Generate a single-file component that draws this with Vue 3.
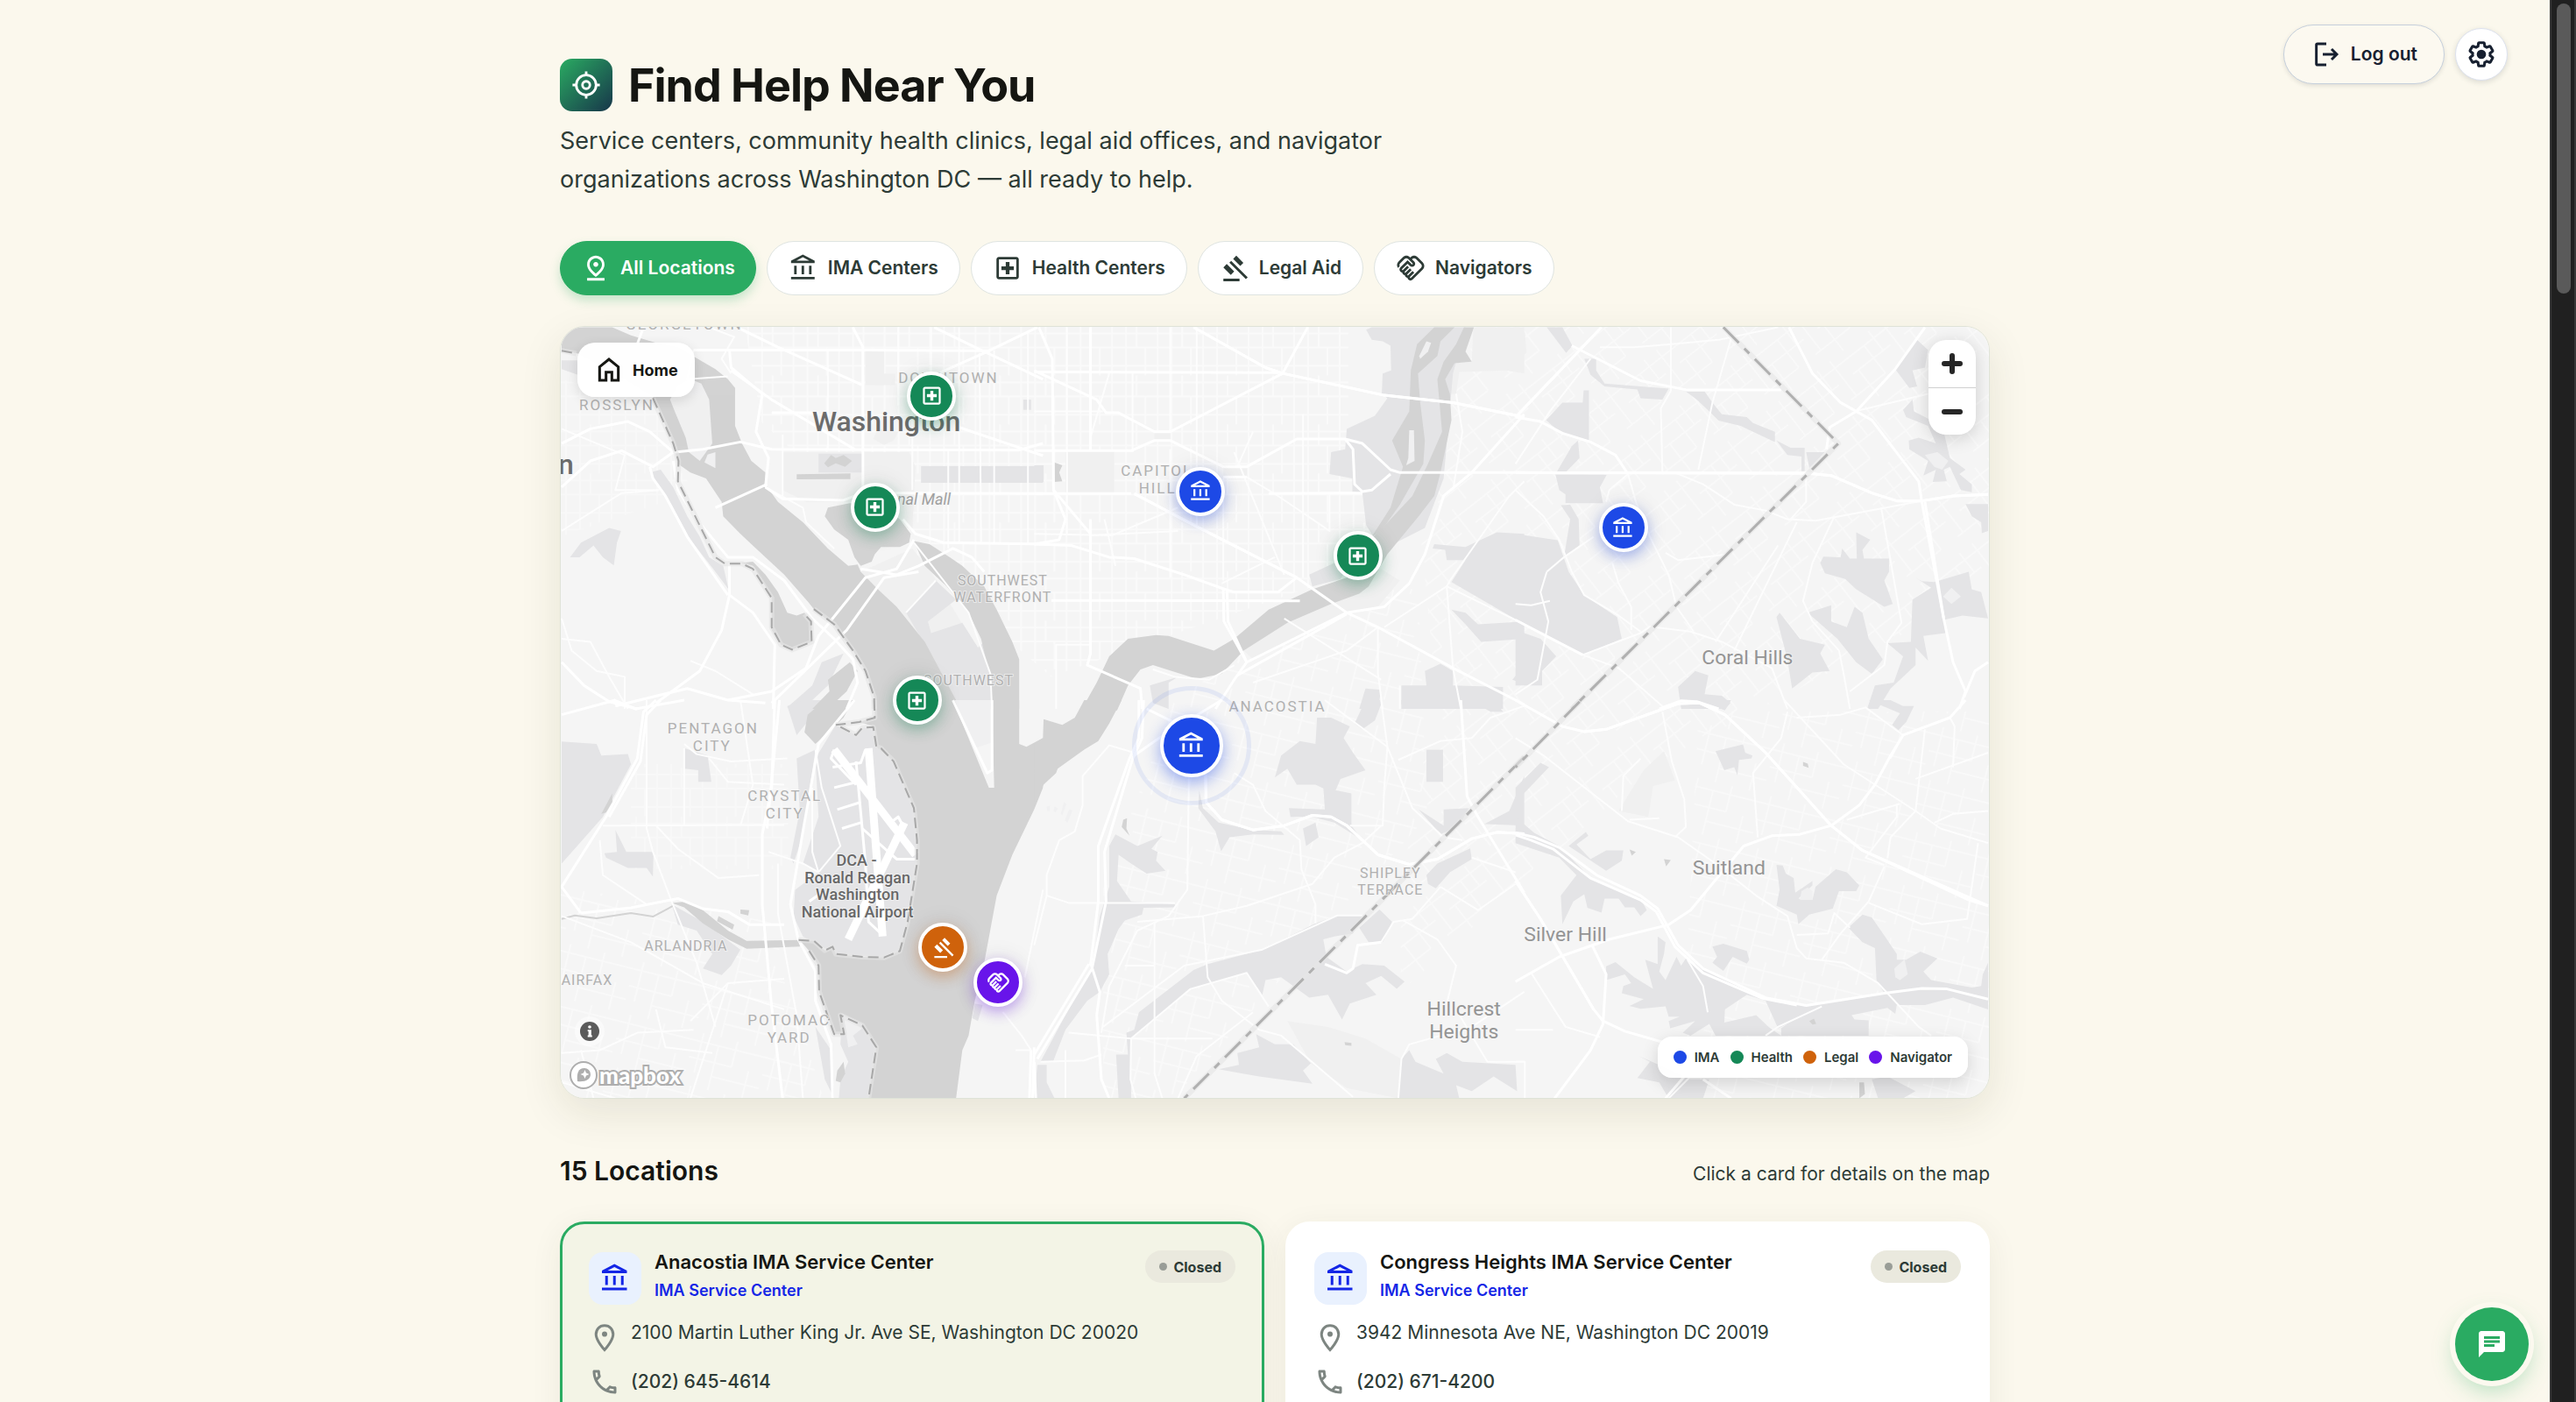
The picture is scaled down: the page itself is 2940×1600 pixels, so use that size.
<script setup>
import { ref } from 'vue'

const icons = {
  all: 'M12 4c1.93 0 5 1.4 5 5.15 0 2.16-1.72 4.67-5 7.32-3.28-2.65-5-5.17-5-7.32C7 5.4 10.07 4 12 4m0-2C8.73 2 5 4.46 5 9.15c0 3.12 2.33 6.41 7 9.85 4.67-3.44 7-6.73 7-9.85C19 4.46 15.27 2 12 2z M12 7c-1.1 0-2 .9-2 2s.9 2 2 2 2-.9 2-2-.9-2-2-2zM5 20h14v2H5z',
  ima: 'M6.5 10h-2v7h2v-7zm6 0h-2v7h2v-7zm8.5 9H2v2h19v-2zm-2.5-9h-2v7h2v-7zm-7-6.74L16.71 6H6.29l5.21-2.74m0-2.26L2 6v2h19V6l-9.5-5z',
  health: 'M19 3H5c-1.1 0-2 .9-2 2v14c0 1.1.9 2 2 2h14c1.1 0 2-.9 2-2V5c0-1.1-.9-2-2-2zm0 16H5V5h14v14zm-8.5-2h3v-3.5H17v-3h-3.5V7h-3v3.5H7v3h3.5z',
  legal: 'M3 20.5h13v2H3zM13.4 2l5.7 5.700-2.500 2.500L10.900 4.500zM5.700 8.700l6 6-2.700 2.700-6-6zM9.300 6.100L22.600 19.400l-1.500 1.500L7.800 7.600z',
  navigator: 'M12.22 19.85c-.18.18-.5.21-.71 0-.18-.18-.21-.5 0-.71l3.39-3.39-1.41-1.41-3.39 3.39c-.19.2-.51.19-.71 0-.21-.21-.18-.53 0-.71l3.39-3.39-1.41-1.41-3.39 3.39c-.18.18-.5.21-.71 0-.19-.19-.19-.51 0-.71l3.39-3.39-1.42-1.41-3.39 3.39c-.18.18-.5.21-.71 0-.19-.2-.19-.51 0-.71L9.52 8.4l1.87 1.86c.95.95 2.59.94 3.54 0 .98-.98.98-2.56 0-3.54l-1.86-1.86.28-.28c.78-.78 2.05-.78 2.83 0l4.24 4.24c.78.78.78 2.05 0 2.83l-8.2 8.2zm9.61-6.78c1.56-1.56 1.56-4.09 0-5.66l-4.24-4.24c-1.56-1.56-4.09-1.56-5.66 0l-.28.28-.28-.28c-1.56-1.56-4.09-1.56-5.66 0L2.17 6.71C.75 8.13.62 10.34 1.77 11.9l1.45-1.45c-.39-.75-.26-1.7.37-2.33l3.54-3.54c.78-.78 2.05-.78 2.83 0l3.56 3.56c.18.18.21.5 0 .71-.21.21-.53.18-.71 0L9.52 5.57l-5.8 5.79c-.98.97-.98 2.56 0 3.54.39.39.89.63 1.42.7.07.52.3 1.02.7 1.42.4.4.9.63 1.42.7.07.52.3 1.02.7 1.42.4.4.9.63 1.42.7.07.54.31 1.03.7 1.42.47.47 1.1.73 1.77.73.67 0 1.3-.26 1.77-.73l8.21-8.19z',
  phone: 'M6.54 5c.06.89.21 1.76.45 2.59l-1.2 1.2c-.41-1.2-.67-2.47-.76-3.79h1.51m9.86 12.02c.85.24 1.72.39 2.6.45v1.49c-1.32-.09-2.59-.35-3.8-.75l1.2-1.19M7.5 3H4c-.55 0-1 .45-1 1 0 9.39 7.61 17 17 17 .55 0 1-.45 1-1v-3.49c0-.55-.45-1-1-1-1.24 0-2.45-.2-3.57-.57-.1-.04-.21-.05-.31-.05-.26 0-.51.1-.71.29l-2.2 2.2c-2.83-1.45-5.15-3.76-6.59-6.59l2.2-2.2c.28-.28.36-.67.25-1.02C8.7 6.45 8.5 5.25 8.5 4c0-.55-.45-1-1-1z',
  chat: 'M20 2H4c-1.1 0-2 .9-2 2v18l4-4h14c1.1 0 2-.9 2-2V4c0-1.1-.9-2-2-2zM6 9h12v2H6V9zm8 5H6v-2h8v2zm4-6H6V6h12v2z',
  gear: 'M19.43 12.98c.04-.32.07-.64.07-.98 0-.34-.03-.66-.07-.98l2.11-1.65c.19-.15.24-.42.12-.64l-2-3.46c-.09-.16-.26-.25-.44-.25-.06 0-.12.01-.17.03l-2.49 1c-.52-.4-1.08-.73-1.69-.98l-.38-2.65C14.46 2.18 14.25 2 14 2h-4c-.25 0-.46.18-.49.42l-.38 2.65c-.61.25-1.17.59-1.69.98l-2.49-1c-.06-.02-.12-.03-.18-.03-.17 0-.34.09-.43.25l-2 3.46c-.13.22-.07.49.12.64l2.11 1.65c-.04.32-.07.65-.07.98 0 .33.03.66.07.98l-2.11 1.65c-.19.15-.24.42-.12.64l2 3.46c.09.16.26.25.44.25.06 0 .12-.01.17-.03l2.49-1c.52.4 1.08.73 1.69.98l.38 2.65c.03.24.24.42.49.42h4c.25 0 .46-.18.49-.42l.38-2.65c.61-.25 1.17-.59 1.69-.98l2.49 1c.06.02.12.03.18.03.17 0 .34-.09.43-.25l2-3.46c.12-.22.07-.49-.12-.64l-2.11-1.65z'
}

const filters = [
  { id: 'all', label: 'All Locations' },
  { id: 'ima', label: 'IMA Centers' },
  { id: 'health', label: 'Health Centers' },
  { id: 'legal', label: 'Legal Aid' },
  { id: 'navigator', label: 'Navigators' }
]
const active = ref('all')

// Marker places are in map units; the map is 1632 x 882 units
const markers = [
  { kind: 'health', x: 424, y: 79 },
  { kind: 'health', x: 359, y: 206 },
  { kind: 'health', x: 407, y: 427 },
  { kind: 'health', x: 911, y: 262 },
  { kind: 'ima', x: 731, y: 188 },
  { kind: 'ima', x: 1214, y: 230 },
  { kind: 'legal', x: 437, y: 710 },
  { kind: 'navigator', x: 500, y: 750 },
  { kind: 'ima', x: 721, y: 479, selected: true }
]
const place = (m) => ({ left: (m.x / 1632) * 100 + '%', top: (m.y / 882) * 100 + '%' })

const legend = [
  { kind: 'ima', label: 'IMA' },
  { kind: 'health', label: 'Health' },
  { kind: 'legal', label: 'Legal' },
  { kind: 'navigator', label: 'Navigator' }
]

const cards = [
  { name: 'Anacostia IMA Service Center', address: '2100 Martin Luther King Jr. Ave SE, Washington DC 20020', phone: '(202) 645-4614', selected: true },
  { name: 'Congress Heights IMA Service Center', address: '3942 Minnesota Ave NE, Washington DC 20019', phone: '(202) 671-4200' }
]

const list = (s) => s.trim().split('|').filter(Boolean)

// Basemap tiles; shapes are point lists in each tile's own grid
const tiles = [
  {
    x: -9, y: -13,
    pale: list('735,470 1140,470 1160,520 1150,740 1040,640 810,640 735,600|1030,200 1095,200 1095,240 1030,240|1000,120 1060,120 1060,240 1000,240|1040,390 1105,400 1090,430 1060,445 1025,425|1150,800 1210,880 1400,1220 1400,1350 1300,1350 1190,1120 985,880'),
    park: list('310,540 345,530 385,590 430,690 470,760 500,830 545,860 562,940 520,880 440,770 380,650|55,830 90,780 180,730 218,740 205,780 195,858 160,830 130,790 85,830|750,1345 830,1270 860,1190 930,1160 880,1270 800,1350|1130,1020 1225,910 1290,975 1200,1050 1210,1090 1310,1055 1360,1140 1380,1120 1405,1230 1405,1350 1300,1350 1240,1220|1178,518 1568,518 1568,575 1178,575|28,155 80,155 80,205 28,185|1505,290 1530,290 1530,325 1505,325|850,475 990,475 990,540 850,540'),
    water: list('28,42 190,42 250,70 330,95 400,110 455,145 520,185 560,220 583,250 583,380 605,440 635,500 680,540 680,580 720,640 800,710 880,800 945,860 975,855 985,880 1040,940 1100,1000 1190,1120 1240,1220 1305,1350 1028,1350 1028,1310 1000,1220 960,1150 900,1065 860,1030 835,1008 818,985 740,890 650,800 600,750 545,690 540,640 490,560 440,540 400,510 385,440 345,340 320,280 200,200 80,132 28,120|600,850 640,860 700,965 700,1080 730,1130 765,1147 828,1120 828,1055 805,1020 780,1030 750,1020 720,950 680,890 640,845|870,690 880,660 950,645 1040,650 1110,700 1145,750 1140,780 1110,795 1050,795 1030,820 1020,845 985,860 965,830 945,770 900,735|1155,775 1205,785 1270,830 1310,860 1380,930 1420,1010 1470,1120 1492,1180 1492,1350 1405,1350 1395,1220 1370,1110 1330,1020 1260,930 1190,860|950,1190 975,1220 940,1290 880,1350 830,1350 885,1290 880,1250|780,546 952,543 952,562 780,563|868,508 890,480 905,490 930,480 957,500 935,520 905,508 880,522'),
    isle: list('440,220 475,235 500,290 510,440 470,500 435,470 425,420 390,330 375,290 400,240|520,470 520,525 485,505 495,478'),
    major: list('450,120 740,120 1000,120 1360,122 1400,122|390,470 480,460 600,435 700,460 1490,463 1568,440|520,660 685,580|680,590 735,630 930,635 990,610 1568,612|570,190 700,290 965,460|590,42 720,110 990,240|960,42 992,110 992,610|1300,385 1568,482|1220,42 1350,110 1568,220|1550,42 1380,130 1170,230|28,590 120,500 220,465 320,520 385,470|28,440 120,390 240,365 310,400 390,475|310,520 320,560 360,620 430,760 560,960|1155,770 1100,870 1000,900 850,1100 810,1210 700,1290 560,1320 430,1280 200,1340|1170,880 1060,900 940,1080 700,1330|385,500 400,600 460,700 560,830 640,830 740,910 830,1040 900,1110 960,1180 975,1260 940,1350|565,850 565,960 640,1020 710,1130 705,1350|565,960 540,1080 470,1220 330,1330|28,1190 100,1270 180,1325 270,1350|1120,700 1160,750 1250,780 1568,785|985,870 1100,890 1170,860 1280,800 1340,830 1380,880|565,120 570,180 670,270 650,400 690,490 680,590|700,335 850,335|270,100 290,42'),
    minor: list('735,410 735,620|880,120 880,460|1105,42 1105,310|1150,230 1150,600|1210,42 1210,230|1265,460 1265,800|1300,42 1300,780|1365,130 1370,780|1412,120 1412,780|1520,60 1520,780|450,120 430,220 560,210|28,390 230,480 200,600 340,600|28,740 220,610 340,600|680,590 800,660 810,710 900,800|1130,1020 1225,910|1155,780 1330,1020 1400,1230 1405,1350|28,1110 120,1120 180,1240 240,1350|440,1185 520,1220 640,1300|28,1040 60,1150 140,1220 230,1240 230,1350|500,42 580,75 540,150 570,200'),
    edge: list('28,122 75,132|320,285 385,440 402,500 400,570 520,830 550,852 605,852 640,870 700,970 700,1070 730,1130 765,1147 828,1120 826,1050 805,1025|835,1008 900,1060 960,1150 1000,1220 1028,1310 1028,1350')
  },
  {
    x: 541, y: -13,
    pale: list('100,468 256,468 256,612 100,612|1405,42 1568,42 1568,200 1510,190 1360,195 1350,270 1320,270 1315,220 1345,165 1400,160|605,520 680,520 680,555 605,555|385,400 435,400 435,430 385,430|890,940 1110,870 1170,910 1100,1000 1000,1020 700,1180 670,1150'),
    park: list('1062,50 1080,42 1380,42 1340,200 1310,560 1250,730 1120,800 1085,760 1062,720 1050,610 1018,605 1018,560 945,545 950,470 995,460 1000,390 1090,345 1130,285 1112,270 1115,200 1142,190 1140,105 1115,90 1080,85|1480,745 1568,750 1568,1060 1335,915 1380,840 1320,840 1315,805 1275,800 1280,785 1380,795|1335,1010 1380,1020 1420,1060 1568,1050 1568,1110 1430,1120 1380,1060|1250,1220 1300,1195 1340,1220 1340,1270 1500,1275 1500,1350 1175,1350 1175,1270 1255,1270|370,1270 460,1240 430,1260 430,1350 380,1330|1060,1280 1110,1285 1100,1350 1040,1350|880,890 960,850 1010,850 980,905 890,930|1530,1250 1568,1200 1568,1265|0,515 30,515 30,572 0,572'),
    water: list('1280,42 1345,42 1300,90 1290,140 1228,200 1235,300 1250,430 1245,510 1170,650 1110,740 1080,760 1140,660 1180,520 1145,430 1200,330 1205,190 1225,100|1375,42 1407,42 1380,125 1400,160 1345,165 1315,220 1330,270 1335,360 1300,540 1280,620 1230,690 1130,820 1070,930 1040,955 950,990 810,1055 670,1150 600,1230 520,1247 380,1200 340,1215 300,1270 265,1355 150,1355 200,1260 240,1170 300,1110 390,1097 430,1100 575,1150 640,1110 750,1010 890,940 1000,900 1060,800 1090,755 1130,712 1210,620 1260,510 1305,400 1290,220 1310,160 1350,100|65,505 90,515 80,540 90,570 65,572'),
    isle: list('1255,90 1270,95 1260,125 1235,150 1232,140|1200,395 1215,395 1217,500 1190,515 1197,490'),
    major: list('0,195 790,197|510,42 740,180 795,200 1120,275 1340,300 1568,350|510,42 740,180 795,200 1120,275 1340,300 1568,350|795,200 875,42|795,200 435,400 385,400 270,335 230,335 200,290 0,190|0,465 310,465 385,430 435,430 605,520 680,520 840,425 995,425 1050,440 1140,530 1170,540 1568,540|605,555 680,555|995,425 1020,460 1025,580 1050,605 1080,600 1140,545|0,612 310,612|320,612 520,725 840,900 1000,1020 1100,1070 1340,1210 1568,1335|320,612 520,725 840,900|750,612 1050,610|15,42 58,150 62,600 180,750|62,600 100,700 80,770 0,785|0,785 120,790 240,830 320,835 480,890 610,940 640,950 780,950 840,900|55,978 850,980|180,42 180,465|180,700 180,1160 170,1200 340,1280 345,1350|605,940 607,1050 680,1190|617,940 620,1050 680,1190 640,1250 580,1350|680,1190 1000,1020 1120,1000 1200,920 1250,820 1310,620 1400,540 1568,340|650,1235 1000,1025'),
    minor: list('105,42 105,750|435,42 435,400|315,200 315,470|435,460 435,900|520,42 520,720|605,560 605,910|640,470 800,890|650,520 700,400|680,555 780,620 945,740 945,612|860,340 860,900|0,330 220,330|240,200 180,420|0,750 250,755 460,660|180,755 460,740|1568,570 1520,620 1330,910 1320,930 1340,1210 1365,1350|1320,930 1568,1060|1320,930 1120,1070|1100,1070 1100,1230 1115,1350|800,1040 1110,1250|380,1215 450,1240 560,1250 640,1200|700,1260 1000,1150 1100,1070|70,1350 70,1130 180,1130|600,920 770,830|1350,270 1370,400 1340,600|225,700 260,860|1170,1270 1170,1350'),
    edge: []
  },
  {
    x: 1091, y: -13,
    pale: list('0,42 30,60 35,130 0,160'),
    park: list('100,42 150,42 182,105 162,130|150,300 215,300 218,258 235,258 235,430 140,400 98,360|220,150 258,150 258,190 285,235 490,252 470,290 400,285 390,255 285,245 240,205|545,262 605,262 630,300 660,340 740,350 760,370 830,400 830,435 720,380 650,362 620,330 580,290|835,430 880,455 925,455 925,535 915,535 915,485 870,480|930,470 990,470 940,525|128,547 292,547 270,590 280,645 160,645 160,615 140,600|145,652 175,650 202,700 205,790 155,830 175,700|180,450 200,430 205,490 155,545 128,545|0,750 135,772 170,880 220,960 325,1035 340,1110 215,1165 0,1045|0,1080 80,1110 130,1170 85,1220 85,1270 0,1270|520,1275 575,1220 617,1235 605,1300 660,1305 688,1330 670,1350 530,1350|975,850 985,828 1040,830 1045,800 1070,835 1092,835 1090,745 1135,770 1110,805 1115,835 1195,835 1195,880 1180,910 1207,990 1180,1000 1090,940 1055,905 990,885|835,1035 845,1020 910,1110 990,1130 975,1160 1005,1220 950,1225 885,1280 870,1180|935,1020 1010,995 1010,1050 1060,1070 1085,1000 1110,1020 1130,1110 1175,1180 1140,1230 1090,1190 1030,1110|1280,900 1300,912 1340,915 1450,880 1460,940 1490,950 1512,1040 1430,1030 1370,1045 1375,1090 1305,1100 1320,1185 1280,1140 1280,1200 1200,1280 1160,1350 1125,1350 1150,1270 1210,1260 1240,1170 1190,1125 1265,1120 1270,975 1330,935|1285,85 1320,120 1310,180 1270,190 1285,245 1260,250 1215,185|1240,325 1270,290 1275,330 1320,355 1370,400 1390,490 1440,530 1420,545 1460,580 1460,607 1425,600 1390,520 1370,530 1380,570 1335,572 1345,530 1305,550 1320,500 1260,460 1258,430 1290,420 1345,440 1320,380 1250,350|1440,648 1512,648 1512,740 1492,748 1490,710 1460,690'),
    water: [],
    isle: list('1310,480 1350,470 1385,500 1365,530 1340,520|1368,965 1395,935 1425,965 1395,990'),
    major: list('275,42 0,350|275,42 0,350|1310,42 1215,185 1090,330 1005,385 995,460|0,350 80,365 150,405 240,435 320,480 360,545|0,540 930,542 1010,550 1140,610 1220,637 1300,637 1400,620 1512,615|0,540 930,542 1010,550 1140,610 1220,637 1300,637 1400,620 1512,615|180,105 400,225 550,257 850,257|875,42 950,200 1040,300 1140,360 1290,570 1300,640 1370,1040 1400,1190 1440,1290 1420,1350|1310,640 1370,1040|0,1045 215,1165|460,1350 530,1322 580,1325 650,1350|1435,1310 1470,1220 1512,1190'),
    minor: list('360,545 385,640 430,760 490,890 515,1000 570,1085|270,110 380,110 500,100 650,85 840,42|497,42 497,260 465,320 470,540|690,80 630,300 585,530|510,540 600,580 700,650 800,670 870,700 960,705 1160,665 1300,637|0,600 90,690 140,770 180,880 220,960 330,1030 400,1085|215,1165 330,1210 480,1350|215,1165 400,1090 430,1068 560,1085 660,1120 820,1210 870,1350|1020,690 950,850 920,980 950,1050 1035,1150 1050,1230 1070,1350|1170,660 1235,1055 1190,1120 1180,1200 1070,1290|1085,330 1320,270|290,640 300,600 360,545|155,830 250,760|480,815 520,840 680,820|310,850 330,920 370,1000 370,1080|840,790 640,1120|900,710 700,1150|0,990 50,995 110,980|100,880 80,950 105,1050 70,1250 0,1300|930,540 930,640 880,700|240,150 110,330 0,510|155,830 100,880'),
    edge: list('665,42 1033,440 180,1350')
  },
  {
    x: -9, y: 427,
    pale: [],
    park: list('28,142 140,150 155,190 240,185 250,220 160,400 28,560|422,165 495,190 507,280 465,280 465,240 422,235|200,445 235,520 322,520 320,605 300,575 240,575 170,540 165,525 205,520|905,85 970,120 990,95 1028,95 1035,160 1090,210 1155,370 1165,500 1192,540 1165,560 1135,760 1110,860 1060,882 905,870 870,850 800,810 770,740 775,650 850,590 800,560 850,400 840,200|780,200 840,170 800,460 770,560 760,540 790,380|380,700 480,760 600,855 570,910 540,942 480,920 510,870 460,790 400,770|750,20 800,0 870,0 780,120|840,1120 890,1200 900,1365 870,1300|925,1075 990,1110 1035,1190 1010,1365 915,1365 920,1300 945,1240 920,1180|1350,1040 1375,1045 1360,1100 1342,1090'),
    water: list('1030,0 1030,60 980,75 1028,90 1035,160 1090,210 1155,370 1165,480 1165,560 1135,760 1110,860 1060,882 990,880 905,870 895,845 870,858 835,825 790,822 820,860 850,910 852,1000 900,1145 932,1145 925,1075 990,1110 1035,1190 1010,1365 1290,1365 1310,1200 1330,1150 1350,1030 1380,900 1420,670 1470,530 1540,375 1568,300 1568,130 1515,160 1492,150 1492,0 1405,0 1412,300 1395,300 1280,0|380,695 430,690 480,720 560,790 620,825 790,822 790,845 620,852 560,820 480,765 420,710|815,50 870,0 960,0 930,60 840,150 805,110|530,740 580,770 575,787 525,758|600,718 628,720 625,738 600,732|910,1270 930,1240 935,1280 920,1310 905,1305|155,390 190,320 190,350 170,385'),
    isle: list('930,1080 990,1125 960,1150 975,1180 945,1190|1285,0 1400,0 1405,145 1350,165'),
    major: list('330,0 290,40 270,200 170,400 28,640 90,730|345,0 300,50 280,210 180,400|90,730 250,712 400,680 480,715 560,725 630,770 740,770|710,0 700,300 670,460 670,700 700,1050 735,1365|725,0 685,440|965,0 850,150 800,450 760,700 785,820 840,930 840,1030 890,1180 895,1365|28,50 200,0|195,0 265,30 420,0|560,0 680,10|1405,0 1405,240 1390,250 1280,0|1525,1365 1530,1200|1535,1365 1540,1190'),
    minor: list('160,430 740,428|420,165 420,430|300,0 300,440 320,520 380,690 460,900 520,1120|690,520 800,560 850,590|420,150 460,185 570,210 750,200|500,200 560,280 740,290|28,740 250,830 480,970 740,1060|560,970 440,1365|720,560 720,730 780,1080 800,1365|330,430 400,510 530,610 660,600|28,1210 150,1200 270,1140 450,1130|1568,650 1510,950|1440,1070 1500,1150 1530,1200 1480,1200|440,1100 560,970 740,955|330,1060 360,1190 510,1210|150,480 160,600 300,700|840,170 860,300 920,500 850,590 830,520 830,300|600,0 640,290 600,430|90,1200 130,1365|28,1310 200,1365'),
    runway: list('900,170 1160,530|1010,165 1055,810|1125,420 945,820'),
    taxi: list('970,210 1000,560 1010,760 1050,800|900,170 890,200 970,290|900,300 975,280|910,375 985,350|925,440 985,420|895,230 985,215 1000,170|820,690 860,660|990,440 1100,545 1160,545|1080,420 1105,400 1120,430 1080,540'),
    stream: '28,750 70,738 140,748 250,730 320,742 385,705',
    edge: list('1028,0 1030,60 980,75 905,85|920,92 970,120 990,95 1025,92 1035,160 1050,165 1090,210 1155,370 1165,480 1165,560 1135,760 1110,860 1060,882 990,880 905,870 895,845 870,858 835,825 785,822|820,860 850,910 852,1000 900,1145 932,1145 920,1080 990,1115 1035,1190 1010,1365')
  },
  {
    x: 541, y: 427,
    pale: list('810,1100 940,1120 1060,1160 1175,1230 1165,1365 1000,1330 885,1245'),
    park: list('905,60 950,60 1010,90 990,130 1020,180 1060,240 980,270 960,320 900,290 840,290 810,235 770,265 790,190 850,140 900,150|1175,0 1470,0 1500,40 1460,40 1420,15 1175,15|1025,80 1060,0 1115,0 1090,70 1050,100|1255,170 1308,170 1308,280 1255,280|528,310 540,370 590,420 700,445 790,450 800,462 700,460 625,470 598,518 580,450 525,370|815,370 930,375 925,300 1015,320 1015,430 1050,480 960,420 890,400 820,400|860,440 900,420 910,470 870,500|260,460 330,500 410,465 375,510 395,520 390,550 420,585 360,595 310,560 270,530 265,620 310,690 450,700 450,710 350,712 345,735 290,755 270,785 235,870 240,940 210,1000 170,1030 100,1130 60,1240 20,1240 100,1080 190,900 210,740 240,640 240,500|10,1250 40,1250 40,1310 65,1365 0,1365|555,905 730,855 900,765 970,738 1050,738 1020,800 960,810 925,820 935,880 1000,930 1050,905 1120,910 1185,965 1160,990 1110,945 1060,970 1095,1010 1010,1040 985,1095 940,1010 880,1020 790,950 740,960 730,1010 680,935 500,990 310,1160 310,1365 270,1365 262,1215 300,1215 295,1140 320,1130 335,1070 510,925|1040,780 1105,718 1145,760 1115,830 1070,830|1255,600 1290,560 1395,508 1400,545 1330,590 1285,645 1260,630|1310,375 1390,370 1360,430 1300,460 1230,375 1310,430|1440,425 1520,380 1568,260 1568,430 1450,425|710,1145 770,1180 830,1180 885,1245 860,1270 890,1315 720,1290 640,1275 590,1265 655,1250 650,1210 720,1190|1175,1230 1200,1200 1220,1240 1310,1280 1285,1230 1320,1210 1370,1240 1540,1250 1545,1340 1470,1290 1400,1340 1350,1320 1360,1365 1165,1365'),
    water: list('0,365 30,290 70,250 75,235 160,170 205,140 240,80 280,0 160,0 130,60 90,85 30,65 28,130 0,148|285,410 297,405 295,440 305,465 280,435|993,1172 1015,1175 1015,1185 995,1183'),
    isle: list('95,350 103,355 90,395 85,390|112,375 122,378 107,420 98,412|40,365 50,362 50,380 42,380|65,365 76,370 68,385 62,380'),
    major: list('335,0 335,130 305,200 205,500 205,690 180,910|350,0 345,130 315,200 225,520 230,690 185,920 10,1230|175,905 0,1215|600,0 400,130 320,190|360,30 550,130|548,250 550,350 600,410 700,445 800,430 890,395 950,400 1000,430 1100,530 1200,563 1290,545 1400,475 1480,453 1568,458|548,250 550,350 600,410 700,445 800,430 890,395 950,400 1000,430 1100,530 1200,563 1290,545 1400,475 1480,453 1568,458|180,900 210,1000 200,1080 215,1300 240,1365|1365,0 1385,330 1420,400 1568,660|930,905 1000,935 1020,920 1035,840 1110,830|0,1240 5,1365'),
    minor: list('0,840 40,670 40,600 80,480 130,450 155,360 155,260 240,155 320,180|40,670 110,695 450,695|495,250 490,650 430,740 330,790 240,980 215,1140|110,1140 310,1160 570,1160|330,760 540,740 680,705 890,630 960,540 1050,490 1110,430|385,760 385,1280 410,1365|540,740 555,950 600,1030 720,1130 790,1150 1020,1360|220,1120 480,910 730,855 970,738 1050,738|310,1160 308,1300 325,1365|310,1160 500,990 680,935 750,1050|640,250 700,290 740,380 850,480 855,580 900,700 900,765|930,0 1130,160 1210,370 1310,470 1370,480|1110,0 1130,160 1120,300 1115,430 1010,430|1165,205 1300,140 1400,130 1460,60 1568,20|1300,640 1210,750 1150,760 1110,830|1300,640 1420,720 1540,630|1180,755 1290,820 1350,910 1320,1040|1350,1060 1450,1240 1568,1240|1165,1365 1175,1230 1200,1180 1400,1120 1568,1000|1400,540 1540,590|20,1240 160,1235 215,1215|460,1365 520,1220 700,1070|100,1200 100,1365|290,910 385,910'),
    edge: list('1568,195 480,1365')
  },
  {
    x: 1091, y: 427,
    pale: list('330,380 410,240 475,175 510,275 440,295 425,400'),
    park: list('0,300 80,215 107,230 0,350|640,175 728,152 735,180 758,190 755,200 715,205 710,258 700,230 668,240|0,400 60,455 140,500 240,610 400,680 420,720 400,740 380,710 350,710 330,680 285,680 275,728 230,712 220,665 185,690 150,768 145,670 195,600 140,540 0,490|170,500 225,452 233,465 195,495 240,545 290,515 345,515 340,550 290,585|835,565 855,567 865,595 890,610 895,660 950,620 950,635 905,680 950,685 960,640 1025,580 1060,590 1100,635 1090,655 1035,655 1015,715 940,735 905,768 900,735 835,705 845,650|630,845 665,835 740,860 748,890 740,903 695,880 665,928 630,900 645,880|1065,780 1110,735 1140,745 1185,815 1220,870 1220,890 1250,890 1295,862 1350,885 1305,930 1330,960 1460,985 1490,980 1495,940 1512,900 1512,1060 1400,1020 1310,1045 1220,1045 1215,1075 1190,1055 1075,1080 1085,1095 1130,1098 1130,1150 850,1150 850,1125 870,1110 840,1125 800,1030 740,1010 670,1060 668,1105 770,1080 810,1120 850,1150 640,1150 620,1110 560,1150 535,1140 575,1100 495,1125 490,1100 525,1085 490,1085 480,1050 400,1058 365,1048 410,1025 340,1005 345,980 370,970 350,940 290,960 290,912 320,898 380,950 440,990 415,890 455,905 455,810 480,830 475,870 460,930 480,960 515,880 530,910 545,885 600,920 800,1020 930,1047 1180,1005 1155,960 1150,850 1110,830|390,1295 430,1240 395,1220 480,1260 560,1300 620,1300 600,1365 490,1365 460,1310|1140,1300 1190,1290 1280,1340 1240,1365 1160,1365|520,0 690,0 670,35 600,5|1130,0 1200,0 1240,20 1275,20 1250,75 1225,103 1205,85 1230,45'),
    water: list('920,212 935,218 938,232 920,225|365,512 385,520 372,533|475,545 497,548 482,570|940,1100 955,1092 962,1110 950,1112|1100,1310 1115,1310 1118,1350 1100,1365'),
    isle: list('915,655 935,642 950,655 950,685 910,685|1212,920 1245,888 1255,940 1230,960 1215,950'),
    major: list('0,0 150,90 220,108 290,100 520,12 590,10 670,50 800,180 1010,430 1110,515 1450,685 1512,705|220,108 290,100 520,12 590,10 670,50 800,180 1010,430 1110,515 1512,705|1440,0 1390,60 1240,120 1200,190 1150,290 1100,360 1010,430 910,460 820,465 730,500 560,720 490,770 300,820 140,880 0,965|0,455 60,470 140,505 260,600 400,670 455,715 520,840 600,920 800,1020 930,1047 1180,1005 1300,988 1380,990 1512,1025|0,462 50,480 120,510 240,610 400,685 450,725 510,845 600,935 790,1022 900,1045|0,620 80,750 250,1060 280,1100 350,1135 480,1175|0,620 80,750 250,1060|245,840 290,940 280,1110 240,1200 125,1365|600,1300 690,1365|480,1365 540,1290'),
    minor: list('0,130 90,190 360,415 520,470 640,560 770,670 870,740 900,850 930,885 1050,900 1160,970 1290,1120 1330,1150|470,40 500,210 540,340 545,435 510,470|870,40 850,130 760,250 775,470|860,0 1050,220 1280,380 1360,440 1512,490|1310,100 1280,380 1200,470 1190,540|1340,420 1400,390 1512,380|1280,270 1512,180|1180,570 1130,690 1040,800 980,890|1130,695 1300,768 1445,750 1480,490|50,935 160,1120 270,1155|0,1130 120,1130|1240,120 1120,25 1040,50 900,60|340,380 345,260 400,200|550,890 600,980 615,1070|980,1050 840,1120 800,1150|1390,60 1405,90 1400,230|1220,360 1220,400 1120,540 1180,565|900,805 1000,800 1020,730 1070,780|1060,410 1230,355|1200,200 1240,120|490,1365 560,1290|0,1240 30,1240 30,1365|365,410 460,405'),
    edge: list('205,5 0,230')
  }
]

// Place names: x is the middle of the line, y its baseline
const labels = [
  ['GEORGETOWN', 141, 3, 'hood'], ['ROSSLYN', 64, 96, 'hood'], ['DOWNTOWN', 443, 65, 'hood'],
  ['CAPITOL', 681, 171, 'hood'], ['HILL', 682, 191, 'hood'], ['ANACOSTIA', 819, 440, 'hood'],
  ['PENTAGON', 174, 465, 'hood'], ['CITY', 173, 485, 'hood'], ['CRYSTAL', 256, 542, 'hood'], ['CITY', 256, 562, 'hood'],
  ['POTOMAC', 261, 798, 'hood'], ['YARD', 261, 818, 'hood'],
  ['SOUTHWEST', 505, 296, 'area'], ['WATERFRONT', 505, 315, 'area'], ['SOUTHWEST', 466, 410, 'area'],
  ['ARLANDRIA', 143, 713, 'area'], ['AIRFAX', 30, 752, 'area'], ['SHIPLEY', 948, 630, 'area'], ['TERRACE', 948, 649, 'area'],
  ['Washington', 372, 120, 'city'], ['n', 6, 169, 'city'],
  ['Coral Hills', 1356, 386, 'town'], ['Suitland', 1335, 626, 'town'], ['Silver Hill', 1148, 702, 'town'],
  ['Hillcrest', 1032, 787, 'town'], ['Heights', 1032, 813, 'town'],
  ['DCA -', 338, 616, 'airport'], ['Ronald Reagan', 339, 636, 'airport'], ['Washington', 339, 655, 'airport'], ['National Airport', 339, 675, 'airport'],
  ['National Mall', 394, 204, 'mall']
]
const layers = ['pale', 'park', 'water', 'isle']
</script>

<template>
  <div class="screen">
    <div class="page">
      <nav class="account" aria-label="Account">
        <button class="logout" type="button">
          <svg viewBox="0 0 24 24" aria-hidden="true"><path d="M12 3H4.500a1 1 0 0 0-1 1v16a1 1 0 0 0 1 1H12M9 12h12M16.500 7.500l4.500 4.500-4.500 4.500" fill="none" stroke="currentColor" stroke-width="2.200" /></svg>
          Log out
        </button>
        <button class="settings" type="button" aria-label="Settings">
          <svg viewBox="0 0 24 24" aria-hidden="true"><path :d="icons.gear" fill="none" stroke="currentColor" stroke-width="2.300" /><circle cx="12" cy="12" r="4" fill="currentColor" /></svg>
        </button>
      </nav>

      <main class="content">
        <header class="intro">
          <div class="heading">
            <span class="badge">
              <svg viewBox="0 0 24 24" fill="none" stroke="currentColor" stroke-width="2" aria-hidden="true"><circle cx="12" cy="12" r="8" /><circle cx="12" cy="12" r="3" /><path d="M12 1v3M12 20v3M1 12h3M20 12h3" /></svg>
            </span>
            <h1>Find Help Near You</h1>
          </div>
          <p>Service centers, community health clinics, legal aid offices, and navigator organizations across Washington DC — all ready to help.</p>
        </header>

        <div class="filters" role="group" aria-label="Filter locations">
          <button v-for="f in filters" :key="f.id" type="button" class="chip" :class="{ on: active === f.id }" :aria-pressed="active === f.id" @click="active = f.id">
            <svg viewBox="0 0 24 24" aria-hidden="true"><path :d="icons[f.id]" fill="currentColor" :fill-rule="f.id === 'legal' ? 'nonzero' : 'evenodd'" /></svg>
            {{ f.label }}
          </button>
        </div>

        <section class="map" aria-label="Map of locations">
          <svg class="base" viewBox="0 0 1632 882" preserveAspectRatio="xMidYMid slice" aria-hidden="true">
            <defs>
              <pattern id="grid" width="52" height="56" patternUnits="userSpaceOnUse"><path d="M0 8H52M0 24H52M0 45H52M6 0V56M22 0V56M34 0V24M44 24V56" class="lane" /></pattern>
              <pattern id="slant" width="74" height="66" patternUnits="userSpaceOnUse" patternTransform="rotate(-38)"><path d="M0 10H74M20 28H74M0 50H50M8 0V50M28 28V66M50 10V50M64 0V28" class="lane" /></pattern>
              <pattern id="tilt" width="86" height="62" patternUnits="userSpaceOnUse" patternTransform="rotate(14)"><path d="M0 10H86M0 30H50M30 46H86M10 0V46M30 10V62M50 0V30M70 30V62" class="lane" /></pattern>
            </defs>
            <rect width="1632" height="882" class="land" />
            <path d="M210 0H900V130L990 200 880 290 560 400 490 340 330 200 230 110z" fill="url(#grid)" />
            <path d="M0 60L110 90 150 190 60 220 0 240zM80 500H260V620H80z" fill="url(#grid)" opacity=".6" />
            <path d="M0 640L240 680 300 882H0zM700 430L880 300 980 300 990 560 700 882H620V640z" fill="url(#tilt)" opacity=".8" />
            <path d="M960 0H1632V300L1250 500 960 760V640L1000 420z" fill="url(#slant)" opacity=".7" />
            <path d="M1300 440H1632V882H1280z" fill="url(#tilt)" opacity=".7" />
            <g v-for="layer in layers" :key="layer">
              <g v-for="(t, i) in tiles" :key="i" :transform="`translate(${t.x} ${t.y}) scale(.357143 .333333)`">
                <polygon v-for="(p, n) in t[layer]" :key="n" :points="p" :class="layer" />
              </g>
            </g>
            <g v-for="(t, i) in tiles" :key="'m' + i" :transform="`translate(${t.x} ${t.y}) scale(.357143 .333333)`">
              <polyline v-if="t.stream" :points="t.stream" class="stream" />
              <polyline v-for="(p, n) in t.minor" :key="n" :points="p" class="minor" />
            </g>
            <g v-for="(t, i) in tiles" :key="'r' + i" :transform="`translate(${t.x} ${t.y}) scale(.357143 .333333)`">
              <polyline v-for="(p, n) in t.major" :key="n" :points="p" class="major" />
              <polyline v-for="(p, n) in t.taxi" :key="'t' + n" :points="p" class="major" />
              <polyline v-for="(p, n) in t.runway" :key="'w' + n" :points="p" class="runway" />
              <polyline v-for="(p, n) in t.edge" :key="'h' + n" :points="p" class="halo" />
              <polyline v-for="(p, n) in t.edge" :key="'e' + n" :points="p" class="edge" :class="{ state: i !== 0 && i !== 3 }" />
            </g>
            <text v-for="(l, i) in labels" :key="i" :x="l[1]" :y="l[2]" :class="l[3]" class="name">{{ l[0] }}</text>
          </svg>

          <button v-for="(m, i) in markers" :key="i" type="button" class="marker" :class="[m.kind, { selected: m.selected }]" :style="place(m)" :aria-label="m.kind + ' location'">
            <svg viewBox="0 0 24 24" aria-hidden="true"><path :d="icons[m.kind]" fill="currentColor" :fill-rule="m.kind === 'legal' ? 'nonzero' : 'evenodd'" /></svg>
          </button>

          <button class="home" type="button">
            <svg viewBox="0 0 24 24" aria-hidden="true"><path d="M4 21V9.500L12 3l8 6.500V21h-5.500v-7h-5v7z" fill="none" stroke="currentColor" stroke-width="2.300" /></svg>
            Home
          </button>

          <div class="zoom">
            <button type="button" aria-label="Zoom in"><svg viewBox="0 0 24 24"><path d="M12 3v18M3 12h18" /></svg></button>
            <button type="button" aria-label="Zoom out"><svg viewBox="0 0 24 24"><path d="M3 12h18" /></svg></button>
          </div>

          <button class="info" type="button" aria-label="Attribution">
            <svg viewBox="0 0 24 24" aria-hidden="true"><circle cx="12" cy="12" r="12" fill="#5b5b5b" /><circle cx="12" cy="6.500" r="2" fill="#fff" /><path d="M9.500 10H14v7h1v2H9.500v-2h1v-5h-1z" fill="#fff" /></svg>
          </button>
          <a class="mapbox" href="#" aria-label="Mapbox">
            <svg viewBox="0 0 34 34" aria-hidden="true"><circle cx="17" cy="17" r="15" fill="#fff" stroke="#aeaeae" stroke-width="2" /><path d="M10 24c-1-9 1-15 8-15a7 7 0 0 1 7 7c0 6-6 9-15 8z" fill="#aeaeae" /><path d="M18.500 11l1.500 3.500 3.500 1.500-3.500 1.500-1.500 3.500-1.500-3.500-3.500-1.500 3.500-1.500z" fill="#fff" /></svg>
            <span>mapbox</span>
          </a>

          <ul class="legend">
            <li v-for="l in legend" :key="l.kind"><i :class="l.kind"></i>{{ l.label }}</li>
          </ul>
        </section>

        <div class="results">
          <h2>15 Locations</h2>
          <p>Click a card for details on the map</p>
        </div>

        <div class="cards">
          <article v-for="c in cards" :key="c.name" class="card" :class="{ selected: c.selected }">
            <div class="top">
              <span class="tile"><svg viewBox="0 0 24 24" aria-hidden="true"><path :d="icons.ima" fill="currentColor" fill-rule="evenodd" /></svg></span>
              <div class="title">
                <h3>{{ c.name }}</h3>
                <p>IMA Service Center</p>
              </div>
              <span class="status"><i></i>Closed</span>
            </div>
            <div class="line">
              <svg viewBox="0 0 24 24" aria-hidden="true"><path d="M12 2.500c-4 0-6.500 3-6.500 6.700C5.500 14 12 21 12 21s6.500-7 6.500-11.800C18.500 5.500 16 2.500 12 2.500z" fill="none" stroke="currentColor" stroke-width="2" /><circle cx="12" cy="9" r="2" fill="currentColor" /></svg>
              <span>{{ c.address }}</span>
            </div>
            <div class="line call">
              <svg viewBox="0 0 24 24" aria-hidden="true"><path :d="icons.phone" fill="currentColor" fill-rule="evenodd" /></svg>
              <a href="#">{{ c.phone }}</a>
            </div>
          </article>
        </div>
      </main>

      <button class="chat" type="button" aria-label="Open chat">
        <svg viewBox="0 0 24 24" aria-hidden="true"><path :d="icons.chat" fill="currentColor" fill-rule="evenodd" /></svg>
      </button>
    </div>
    <div class="scrollbar" aria-hidden="true"><div class="thumb"></div></div>
  </div>
</template>

<style>
body { margin: 0; background: #fbf8ed; }
</style>

<style scoped>
* { box-sizing: border-box; }
h1, h2, h3, p, ul { margin: 0; padding: 0; }
button { font: inherit; color: inherit; margin: 0; padding: 0; border: 0; background: none; cursor: pointer; }
a { color: inherit; text-decoration: none; }
svg { display: block; flex: none; }

.screen { display: flex; height: 100vh; overflow: hidden; background: #fbf8ed; color: #2d3b36; font-family: Inter, "Liberation Sans", sans-serif; }
.page { position: relative; flex: 1; min-width: 0; overflow: hidden; }
.content { max-width: 1632px; margin: 0 auto; padding-top: 67px; }

.scrollbar { width: 30px; background: #202020; border-left: 2px solid #383838; border-right: 2px solid #383838; padding: 4px 4px 4px 6px; }
.thumb { height: 331px; border-radius: 8px; background: #5a5a5a; }

.account { position: absolute; top: 28px; right: 48px; display: flex; align-items: center; gap: 12px; color: #172030; }
.logout { display: flex; align-items: center; gap: 12px; height: 68px; padding: 0 30px 0 32px; border: 1px solid #c6d0dc; border-radius: 34px; background: #fcf9f0; box-shadow: 0 2px 5px rgba(30, 40, 50, .12); font-size: 21px; line-height: 26px; font-weight: 600; }
.logout svg { width: 32px; height: 32px; }
.settings { display: grid; place-items: center; width: 60px; height: 60px; border: 1px solid #dde2ee; border-radius: 50%; background: #fff; box-shadow: 0 2px 6px rgba(30, 40, 50, .14); }
.settings svg { width: 32px; height: 32px; }

.heading { display: flex; align-items: center; gap: 18px; height: 60px; }
.badge { display: grid; place-items: center; width: 60px; height: 60px; border-radius: 14px; color: #fff; background: linear-gradient(135deg, #2aab62, #17364a); }
.badge svg { width: 34px; height: 34px; }
h1 { padding-top: 2px; color: #151612; font-size: 52px; line-height: 60px; font-weight: 700; letter-spacing: -1px; }
.intro p { max-width: 1000px; margin-top: 12px; font-size: 27px; line-height: 44px; }

.filters { display: flex; flex-wrap: wrap; gap: 12px; margin-top: 48px; }
.chip { display: flex; align-items: center; gap: 11px; height: 62px; padding: 0 24px; border: 1px solid #dfe4e1; border-radius: 31px; background: #fff; font-size: 21px; line-height: 26px; font-weight: 600; }
.chip svg { width: 34px; height: 34px; }
.chip.on { padding: 0 23px; border-color: #2aab62; background: #2aab62; color: #fff; box-shadow: 0 6px 12px rgba(42, 171, 98, .25); }

.map { position: relative; height: 882px; margin-top: 35px; border: 1px solid #dfe3d8; border-radius: 28px; overflow: hidden; box-shadow: 0 16px 48px rgba(50, 50, 20, .1); }
.base { width: 100%; height: 100%; }
.land { fill: #f5f5f5; }
.pale { fill: #f0f0f0; }
.park { fill: #e4e4e6; }
.water { fill: #d3d3d3; }
.isle { fill: #f0f0f1; }
.lane { fill: none; stroke: #fafafa; stroke-width: 2; }
.minor, .major, .runway, .edge, .halo, .stream { fill: none; vector-effect: non-scaling-stroke; stroke-linejoin: round; }
.minor { stroke: #fdfdfd; stroke-width: 2; }
.major { stroke: #fff; stroke-width: 3; }
.runway { stroke: #fff; stroke-width: 9; }
.stream { stroke: #d3d3d3; stroke-width: 2; }
.halo { stroke: #e6e6e6; stroke-width: 6; opacity: .6; }
.edge { stroke: #a8a8a8; stroke-width: 2; stroke-dasharray: 12 6; }
.edge.state { stroke: #b0b0b0; stroke-width: 3; stroke-dasharray: 25 9 8 9; }
.name { text-anchor: middle; font-family: Roboto, "Liberation Sans", sans-serif; paint-order: stroke; stroke: #f5f5f5; stroke-width: 2; stroke-opacity: .7; }
.hood { fill: #b0b0b0; font-size: 17px; letter-spacing: 2px; }
.area { fill: #b0b0b0; font-size: 16px; letter-spacing: 1px; }
.city { fill: #6b6b6b; font-size: 32px; font-weight: 500; }
.town { fill: #949494; font-size: 23px; }
.airport { fill: #686868; font-size: 18px; font-weight: 500; }
.mall { fill: #a0a0a0; font-size: 18px; font-style: italic; }

.ima { --tone: #1d49e6; --glow: 29, 73, 230; }
.health { --tone: #158857; --glow: 21, 136, 87; }
.legal { --tone: #cf620b; --glow: 207, 98, 11; }
.navigator { --tone: #6814ea; --glow: 104, 20, 234; }
.marker { position: absolute; display: grid; place-items: center; width: 56px; height: 56px; border: 4px solid #fff; border-radius: 50%; background: var(--tone); color: #fff; transform: translate(-50%, -50%); box-shadow: 0 6px 16px rgba(var(--glow), .35), 0 0 26px rgba(60, 60, 60, .1); }
.marker svg { width: 27px; height: 27px; }
.marker.selected { width: 72px; height: 72px; box-shadow: 0 6px 18px rgba(29, 73, 230, .45); }
.marker.selected::after { content: ""; position: absolute; inset: -36px; border: 5px solid rgba(29, 73, 230, .08); border-radius: 50%; }
.marker.selected svg { width: 34px; height: 34px; }

.home { position: absolute; left: 19px; top: 18px; display: flex; align-items: center; gap: 11px; height: 62px; padding: 0 19px 0 20px; border-radius: 20px; background: rgba(255, 255, 255, .97); color: #161713; font-size: 18px; font-weight: 700; box-shadow: 0 4px 14px rgba(0, 0, 0, .12); }
.home svg { width: 32px; height: 32px; }
.zoom { position: absolute; top: 15px; right: 15px; display: flex; flex-direction: column; width: 54px; border-radius: 20px; background: #fff; box-shadow: 0 4px 20px rgba(0, 0, 0, .16); }
.zoom button { display: grid; place-items: center; height: 54px; }
.zoom button + button { border-top: 1px solid #d0d0d0; }
.zoom svg { width: 24px; height: 24px; fill: none; stroke: #262626; stroke-width: 6; stroke-linecap: round; }
.info { position: absolute; left: 16px; bottom: 59px; display: grid; place-items: center; width: 34px; height: 34px; border-radius: 50%; background: rgba(255, 255, 255, .5); }
.info svg { width: 22px; height: 22px; }
.mapbox { position: absolute; left: 9px; bottom: 9px; display: flex; align-items: center; gap: 1px; }
.mapbox svg { width: 34px; height: 34px; }
.mapbox span { color: #fff; font-family: Lato, sans-serif; font-size: 26px; line-height: 30px; font-weight: 900; -webkit-text-stroke: 4px #aeaeae; paint-order: stroke; }
.legend { position: absolute; right: 24px; bottom: 23px; display: flex; align-items: center; gap: 12px; height: 47px; padding: 0 18px; border-radius: 16px; background: rgba(255, 255, 255, .96); box-shadow: 0 6px 20px rgba(0, 0, 0, .14); list-style: none; font-size: 15px; font-weight: 600; }
.legend li { display: flex; align-items: center; gap: 9px; }
.legend i { width: 15px; height: 15px; border-radius: 50%; background: var(--tone); }

.results { display: flex; align-items: baseline; justify-content: space-between; margin-top: 62px; }
h2 { color: #151612; font-size: 30px; line-height: 40px; font-weight: 600; }
.results p { font-size: 21px; line-height: 28px; }

.cards { display: grid; grid-template-columns: 1fr 1fr; gap: 24px; margin-top: 38px; }
.card { height: 300px; padding: 30px; border: 3px solid #fff; border-radius: 28px; background: #fff; box-shadow: 0 8px 36px rgba(50, 50, 20, .07); }
.card.selected { border-color: #2aab62; background: #f3f4e6; }
.top { display: flex; align-items: flex-start; gap: 15px; }
.tile { display: grid; place-items: center; width: 60px; height: 60px; margin-top: 2px; border-radius: 16px; background: #e9f1fe; color: #1426e6; }
.tile svg { width: 36px; height: 36px; }
.title { flex: 1; }
h3 { color: #151612; font-size: 22px; line-height: 26px; font-weight: 600; }
.title p { margin-top: 7px; color: #1426e6; font-size: 18px; line-height: 26px; font-weight: 600; }
.status { display: flex; align-items: center; gap: 7px; height: 37px; padding: 0 16px; border-radius: 19px; background: #eae9de; font-size: 16px; font-weight: 700; }
.status i { width: 9px; height: 9px; border-radius: 50%; background: #999d97; }
.line { display: flex; align-items: flex-start; gap: 12px; margin-top: 16px; font-size: 21px; line-height: 32px; }
.line svg { width: 36px; height: 36px; margin-top: 4px; color: #7d8581; }
.call { align-items: center; margin-top: 14px; font-weight: 500; }
.call svg { margin-top: 0; }

.chat { position: absolute; right: 24px; bottom: 24px; display: grid; place-items: center; width: 84px; height: 84px; border-radius: 50%; background: #2aab62; color: #fff; box-shadow: 0 0 0 6px #fcf9ef, 0 10px 26px rgba(42, 171, 98, .35); }
.chat svg { width: 36px; height: 36px; }
</style>
